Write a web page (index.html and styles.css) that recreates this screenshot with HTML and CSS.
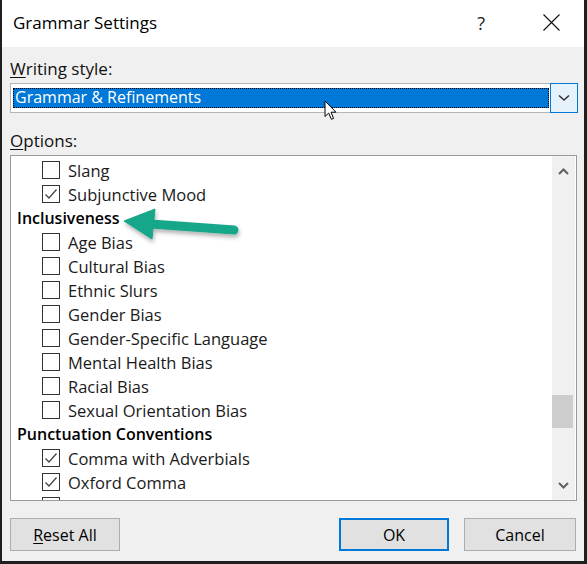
FILE: index.html
```html
<!DOCTYPE html>
<html>
<head>
<meta charset="utf-8">
<title>Grammar Settings</title>
<link rel="stylesheet" href="styles.css">
</head>
<body>
<div class="dialog">
  <div class="titlebar">
    <span class="title">Grammar Settings</span>
    <span class="help">?</span>
    <span class="close">
      <svg width="17" height="17" viewBox="0 0 17 17"><path d="M0.5 0.5 L16.5 16.5 M16.5 0.5 L0.5 16.5" stroke="#111" stroke-width="1.1" fill="none"/></svg>
    </span>
  </div>
  <div class="content">
    <div class="label first"><u>W</u>riting style:</div>
    <div class="combo">
      <div class="combo-field"><span class="combo-sel">Grammar &amp; Refinements</span></div>
      <div class="combo-btn">
        <svg width="12" height="8" viewBox="0 0 12 8"><path d="M1 1.5 L6 6 L11 1.5" stroke="#333" stroke-width="1.6" fill="none"/></svg>
      </div>
    </div>
    <div class="label second"><u>O</u>ptions:</div>
    <div class="listbox">
      <div class="items">
        <div class="row"><span class="cb"></span><span>Slang</span></div>
        <div class="row"><span class="cb checked"><svg width="16" height="16" viewBox="0 0 16 16"><path d="M2.5 8.5 L6 12 L13.5 3.5" stroke="#444" stroke-width="1.3" fill="none"/></svg></span><span>Subjunctive Mood</span></div>
        <div class="row head">Inclusiveness</div>
        <div class="row"><span class="cb"></span><span>Age Bias</span></div>
        <div class="row"><span class="cb"></span><span>Cultural Bias</span></div>
        <div class="row"><span class="cb"></span><span>Ethnic Slurs</span></div>
        <div class="row"><span class="cb"></span><span>Gender Bias</span></div>
        <div class="row"><span class="cb"></span><span>Gender-Specific Language</span></div>
        <div class="row"><span class="cb"></span><span>Mental Health Bias</span></div>
        <div class="row"><span class="cb"></span><span>Racial Bias</span></div>
        <div class="row"><span class="cb"></span><span>Sexual Orientation Bias</span></div>
        <div class="row head">Punctuation Conventions</div>
        <div class="row"><span class="cb checked"><svg width="16" height="16" viewBox="0 0 16 16"><path d="M2.5 8.5 L6 12 L13.5 3.5" stroke="#444" stroke-width="1.3" fill="none"/></svg></span><span>Comma with Adverbials</span></div>
        <div class="row"><span class="cb checked"><svg width="16" height="16" viewBox="0 0 16 16"><path d="M2.5 8.5 L6 12 L13.5 3.5" stroke="#444" stroke-width="1.3" fill="none"/></svg></span><span>Oxford Comma</span></div>
        <div class="row"><span class="cb"></span></div>
      </div>
      <div class="scrollbar">
        <div class="sb-arrow">
          <svg width="11" height="7" viewBox="0 0 11 7"><path d="M1 6 L5.5 1.5 L10 6" stroke="#606060" stroke-width="2" fill="none"/></svg>
        </div>
        <div class="sb-track"><div class="sb-thumb"></div></div>
        <div class="sb-arrow">
          <svg width="11" height="7" viewBox="0 0 11 7"><path d="M1 1 L5.5 5.5 L10 1" stroke="#606060" stroke-width="2" fill="none"/></svg>
        </div>
      </div>
    </div>
    <div class="buttons">
      <button class="btn"><u>R</u>eset All</button>
      <span class="spacer"></span>
      <button class="btn default">OK</button>
      <button class="btn wide">Cancel</button>
    </div>
  </div>
  <svg class="pointer" width="14" height="21" viewBox="0 0 14 21">
    <path d="M1 1 L1 16.5 L4.7 13 L7.4 19.3 L9.6 18.4 L7 12.2 L12 12.2 Z" fill="#fff" stroke="#000" stroke-width="1" stroke-linejoin="round"/>
  </svg>
  <svg class="annot" width="140" height="50" viewBox="0 0 140 50">
    <defs>
      <filter id="sh" x="-20%" y="-40%" width="140%" height="190%">
        <feDropShadow dx="1" dy="3" stdDeviation="2" flood-color="#000" flood-opacity="0.3"/>
      </filter>
    </defs>
    <g filter="url(#sh)" fill="#17a689" stroke="#17a689">
      <line x1="30" y1="19" x2="113" y2="25" stroke-width="9" stroke-linecap="round"/>
      <polygon points="3,16 34,4 31,34" stroke-width="1" stroke-linejoin="round"/>
    </g>
  </svg>
</div>
</body>
</html>
```

FILE: styles.css
```css
html, body {
  margin: 0;
  padding: 0;
}
body {
  width: 587px;
  height: 564px;
  background: #1f1f1f;
  overflow: hidden;
  font-family: "Open Sans", "Noto Sans", sans-serif;
  color: #000;
}
.dialog {
  position: relative;
  margin-left: 2px;
  width: 582px;
  height: 561px;
  background: #f0f0f0;
  display: flex;
  flex-direction: column;
}
.titlebar {
  height: 47px;
  background: #fff;
  display: flex;
  align-items: center;
  padding-left: 11px;
  flex: none;
}
.title {
  font-size: 17px;
  flex: 1;
  margin-top: -2px;
}
.help {
  font-size: 18px;
  color: #222;
  margin-right: 58px;
  margin-top: -2px;
}
.close {
  display: flex;
  margin-right: 24px;
  margin-top: -2px;
}
.content {
  padding: 0 6px 0 8px;
  display: flex;
  flex-direction: column;
}
.label {
  font-size: 17px;
  line-height: 20px;
  height: 20px;
  color: #111;
}
.label u {
  text-underline-offset: 2px;
}
.label.first {
  margin-top: 12px;
}
.label.second {
  margin-top: 18px;
}
.combo {
  margin-top: 4px;
  height: 30px;
  display: flex;
  box-sizing: border-box;
}
.combo-field {
  flex: 1;
  background: #fff;
  border: 1px solid #b5b5b5;
  border-right: none;
  padding: 4px 1px 4px 2px;
  display: flex;
}
.combo-sel {
  flex: 1;
  background: #0078d7;
  color: #fff;
  font-size: 16px;
  line-height: 18px;
  padding-left: 2px;
  outline: 1px dotted #000;
  outline-offset: -1px;
}
.combo-btn {
  width: 26px;
  background: #e5f1fb;
  border: 1px solid #0078d7;
  display: flex;
  align-items: center;
  justify-content: center;
}
.listbox {
  margin-top: 4px;
  height: 346px;
  width: 567px;
  box-sizing: border-box;
  border: 1px solid #9a9a9a;
  background: #fff;
  display: flex;
  overflow: hidden;
}
.items {
  flex: 1;
  padding-top: 2px;
  overflow: hidden;
  font-size: 16.5px;
}
.row {
  height: 24px;
  display: flex;
  align-items: center;
  padding-left: 31px;
  white-space: nowrap;
  color: #1a1a1a;
}
.row.head {
  padding-left: 6px;
  font-weight: 600;
  font-size: 16px;
  color: #000;
}
.cb {
  width: 18px;
  height: 18px;
  box-sizing: border-box;
  border: 1px solid #333;
  margin-right: 8px;
  display: flex;
  align-items: center;
  justify-content: center;
  flex: none;
  background: #fff;
}
.scrollbar {
  width: 23px;
  margin-right: 1px;
  background: #f0f0f0;
  display: flex;
  flex-direction: column;
}
.sb-arrow {
  height: 30px;
  display: flex;
  align-items: center;
  justify-content: center;
  flex: none;
}
.sb-track {
  flex: 1;
}
.sb-thumb {
  margin-top: 209px;
  height: 33px;
  margin-right: 2px;
  background: #cdcdcd;
}
.buttons {
  margin-top: 17px;
  display: flex;
  width: 566px;
}
.spacer {
  flex: 1;
}
.btn {
  width: 110px;
  height: 33px;
  background: #e1e1e1;
  border: 1px solid #adadad;
  font-family: "Open Sans", "Noto Sans", sans-serif;
  font-size: 16px;
  color: #000;
  padding: 0;
  margin: 0;
}
.btn.wide {
  width: 112px;
}
.btn u {
  text-underline-offset: 2px;
}
.btn.default {
  border: 2px solid #0078d7;
  margin-right: 15px;
}
.pointer {
  position: absolute;
  left: 322px;
  top: 100px;
}
.annot {
  position: absolute;
  left: 119px;
  top: 205px;
}
```
